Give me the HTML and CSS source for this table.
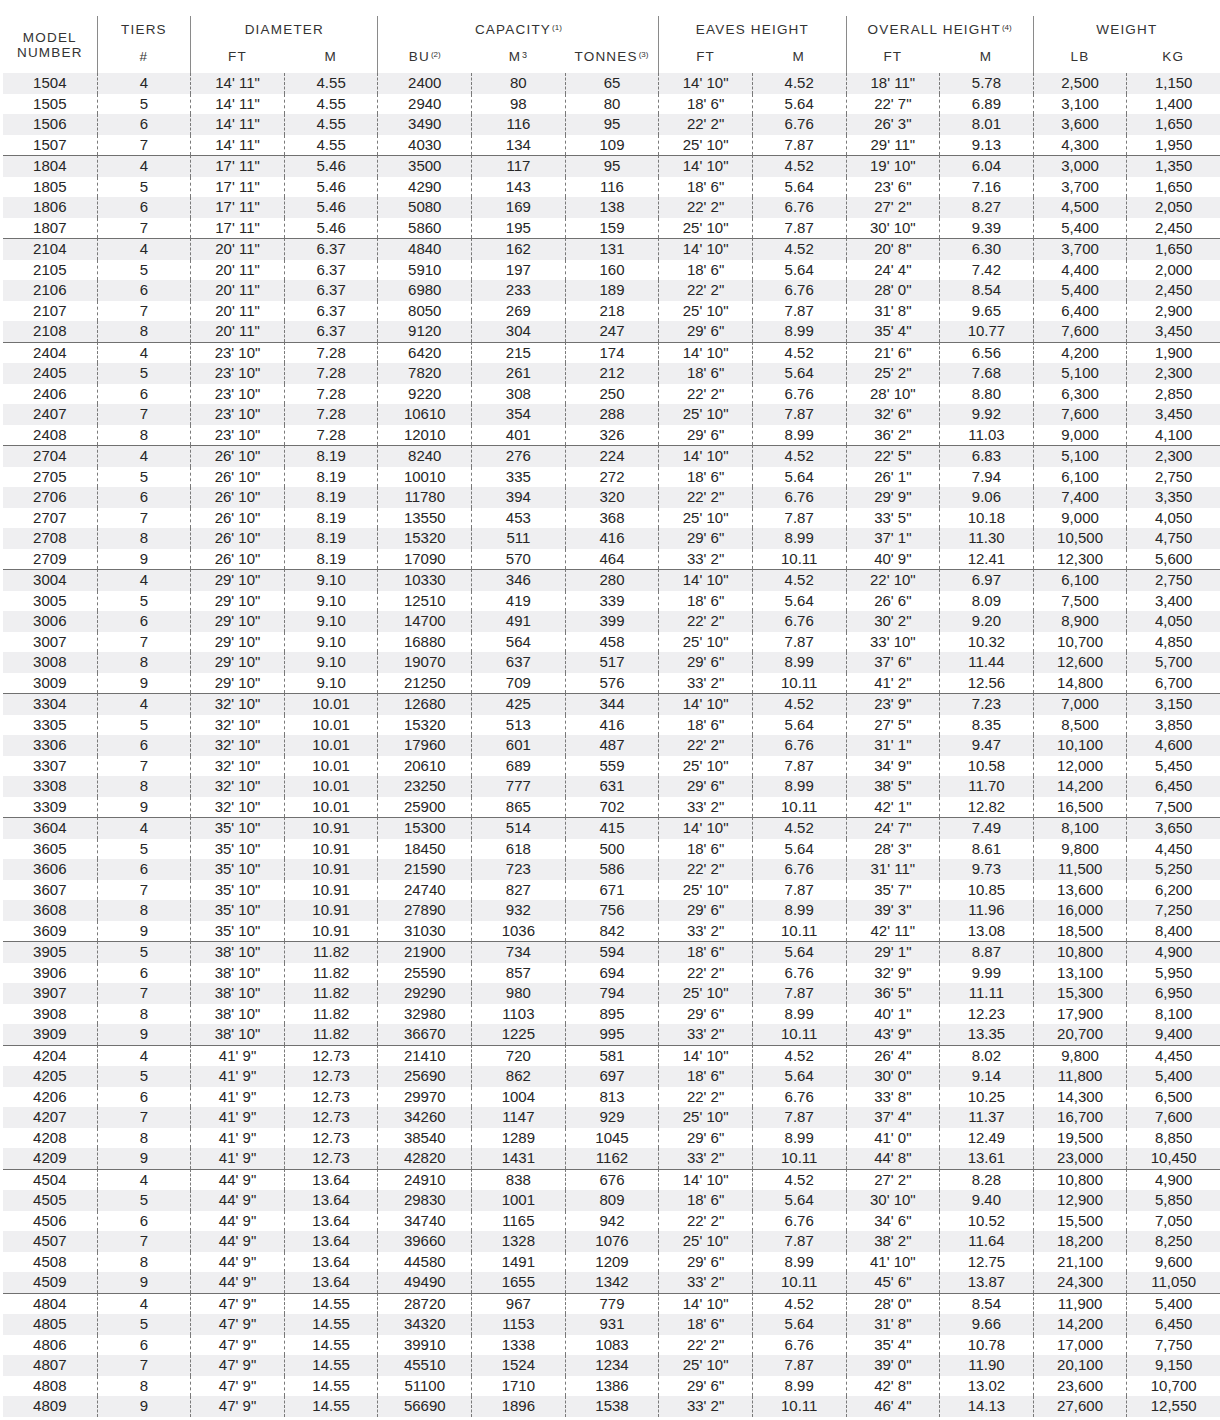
FILE: index.html
```html
<!DOCTYPE html>
<html>
<head>
<meta charset="utf-8">
<link rel="stylesheet" href="styles.css">
</head>
<body>
<table class="specs">
<colgroup>
<col class="c"><col class="c"><col class="c"><col class="c"><col class="c"><col class="c"><col class="c"><col class="c"><col class="c"><col class="c"><col class="c"><col class="c"><col class="c">
</colgroup>
<thead>
<tr class="h1">
<th rowspan="2" class="model">MODEL<br>NUMBER</th>
<th class="g">TIERS</th>
<th colspan="2" class="g">DIAMETER</th>
<th colspan="3" class="g">CAPACITY<sup class="fn">(1)</sup></th>
<th colspan="2" class="g">EAVES HEIGHT</th>
<th colspan="2" class="g">OVERALL HEIGHT<sup class="fn">(4)</sup></th>
<th colspan="2" class="g">WEIGHT</th>
</tr>
<tr class="h2">
<th class="g">#</th>
<th class="g">FT</th><th>M</th>
<th class="g">BU<sup class="fn">(2)</sup></th><th>M<sup class="cube">3</sup></th><th>TONNES<sup class="fn">(3)</sup></th>
<th class="g">FT</th><th>M</th>
<th class="g">FT</th><th>M</th>
<th class="g">LB</th><th>KG</th>
</tr>
</thead>
<tbody>
<tr><td>1504</td><td>4</td><td>14' 11"</td><td>4.55</td><td>2400</td><td>80</td><td>65</td><td>14' 10"</td><td>4.52</td><td>18' 11"</td><td>5.78</td><td>2,500</td><td>1,150</td></tr>
<tr><td>1505</td><td>5</td><td>14' 11"</td><td>4.55</td><td>2940</td><td>98</td><td>80</td><td>18' 6"</td><td>5.64</td><td>22' 7"</td><td>6.89</td><td>3,100</td><td>1,400</td></tr>
<tr><td>1506</td><td>6</td><td>14' 11"</td><td>4.55</td><td>3490</td><td>116</td><td>95</td><td>22' 2"</td><td>6.76</td><td>26' 3"</td><td>8.01</td><td>3,600</td><td>1,650</td></tr>
<tr><td>1507</td><td>7</td><td>14' 11"</td><td>4.55</td><td>4030</td><td>134</td><td>109</td><td>25' 10"</td><td>7.87</td><td>29' 11"</td><td>9.13</td><td>4,300</td><td>1,950</td></tr>
<tr class="grp"><td>1804</td><td>4</td><td>17' 11"</td><td>5.46</td><td>3500</td><td>117</td><td>95</td><td>14' 10"</td><td>4.52</td><td>19' 10"</td><td>6.04</td><td>3,000</td><td>1,350</td></tr>
<tr><td>1805</td><td>5</td><td>17' 11"</td><td>5.46</td><td>4290</td><td>143</td><td>116</td><td>18' 6"</td><td>5.64</td><td>23' 6"</td><td>7.16</td><td>3,700</td><td>1,650</td></tr>
<tr><td>1806</td><td>6</td><td>17' 11"</td><td>5.46</td><td>5080</td><td>169</td><td>138</td><td>22' 2"</td><td>6.76</td><td>27' 2"</td><td>8.27</td><td>4,500</td><td>2,050</td></tr>
<tr><td>1807</td><td>7</td><td>17' 11"</td><td>5.46</td><td>5860</td><td>195</td><td>159</td><td>25' 10"</td><td>7.87</td><td>30' 10"</td><td>9.39</td><td>5,400</td><td>2,450</td></tr>
<tr class="grp"><td>2104</td><td>4</td><td>20' 11"</td><td>6.37</td><td>4840</td><td>162</td><td>131</td><td>14' 10"</td><td>4.52</td><td>20' 8"</td><td>6.30</td><td>3,700</td><td>1,650</td></tr>
<tr><td>2105</td><td>5</td><td>20' 11"</td><td>6.37</td><td>5910</td><td>197</td><td>160</td><td>18' 6"</td><td>5.64</td><td>24' 4"</td><td>7.42</td><td>4,400</td><td>2,000</td></tr>
<tr><td>2106</td><td>6</td><td>20' 11"</td><td>6.37</td><td>6980</td><td>233</td><td>189</td><td>22' 2"</td><td>6.76</td><td>28' 0"</td><td>8.54</td><td>5,400</td><td>2,450</td></tr>
<tr><td>2107</td><td>7</td><td>20' 11"</td><td>6.37</td><td>8050</td><td>269</td><td>218</td><td>25' 10"</td><td>7.87</td><td>31' 8"</td><td>9.65</td><td>6,400</td><td>2,900</td></tr>
<tr><td>2108</td><td>8</td><td>20' 11"</td><td>6.37</td><td>9120</td><td>304</td><td>247</td><td>29' 6"</td><td>8.99</td><td>35' 4"</td><td>10.77</td><td>7,600</td><td>3,450</td></tr>
<tr class="grp"><td>2404</td><td>4</td><td>23' 10"</td><td>7.28</td><td>6420</td><td>215</td><td>174</td><td>14' 10"</td><td>4.52</td><td>21' 6"</td><td>6.56</td><td>4,200</td><td>1,900</td></tr>
<tr><td>2405</td><td>5</td><td>23' 10"</td><td>7.28</td><td>7820</td><td>261</td><td>212</td><td>18' 6"</td><td>5.64</td><td>25' 2"</td><td>7.68</td><td>5,100</td><td>2,300</td></tr>
<tr><td>2406</td><td>6</td><td>23' 10"</td><td>7.28</td><td>9220</td><td>308</td><td>250</td><td>22' 2"</td><td>6.76</td><td>28' 10"</td><td>8.80</td><td>6,300</td><td>2,850</td></tr>
<tr><td>2407</td><td>7</td><td>23' 10"</td><td>7.28</td><td>10610</td><td>354</td><td>288</td><td>25' 10"</td><td>7.87</td><td>32' 6"</td><td>9.92</td><td>7,600</td><td>3,450</td></tr>
<tr><td>2408</td><td>8</td><td>23' 10"</td><td>7.28</td><td>12010</td><td>401</td><td>326</td><td>29' 6"</td><td>8.99</td><td>36' 2"</td><td>11.03</td><td>9,000</td><td>4,100</td></tr>
<tr class="grp"><td>2704</td><td>4</td><td>26' 10"</td><td>8.19</td><td>8240</td><td>276</td><td>224</td><td>14' 10"</td><td>4.52</td><td>22' 5"</td><td>6.83</td><td>5,100</td><td>2,300</td></tr>
<tr><td>2705</td><td>5</td><td>26' 10"</td><td>8.19</td><td>10010</td><td>335</td><td>272</td><td>18' 6"</td><td>5.64</td><td>26' 1"</td><td>7.94</td><td>6,100</td><td>2,750</td></tr>
<tr><td>2706</td><td>6</td><td>26' 10"</td><td>8.19</td><td>11780</td><td>394</td><td>320</td><td>22' 2"</td><td>6.76</td><td>29' 9"</td><td>9.06</td><td>7,400</td><td>3,350</td></tr>
<tr><td>2707</td><td>7</td><td>26' 10"</td><td>8.19</td><td>13550</td><td>453</td><td>368</td><td>25' 10"</td><td>7.87</td><td>33' 5"</td><td>10.18</td><td>9,000</td><td>4,050</td></tr>
<tr><td>2708</td><td>8</td><td>26' 10"</td><td>8.19</td><td>15320</td><td>511</td><td>416</td><td>29' 6"</td><td>8.99</td><td>37' 1"</td><td>11.30</td><td>10,500</td><td>4,750</td></tr>
<tr><td>2709</td><td>9</td><td>26' 10"</td><td>8.19</td><td>17090</td><td>570</td><td>464</td><td>33' 2"</td><td>10.11</td><td>40' 9"</td><td>12.41</td><td>12,300</td><td>5,600</td></tr>
<tr class="grp"><td>3004</td><td>4</td><td>29' 10"</td><td>9.10</td><td>10330</td><td>346</td><td>280</td><td>14' 10"</td><td>4.52</td><td>22' 10"</td><td>6.97</td><td>6,100</td><td>2,750</td></tr>
<tr><td>3005</td><td>5</td><td>29' 10"</td><td>9.10</td><td>12510</td><td>419</td><td>339</td><td>18' 6"</td><td>5.64</td><td>26' 6"</td><td>8.09</td><td>7,500</td><td>3,400</td></tr>
<tr><td>3006</td><td>6</td><td>29' 10"</td><td>9.10</td><td>14700</td><td>491</td><td>399</td><td>22' 2"</td><td>6.76</td><td>30' 2"</td><td>9.20</td><td>8,900</td><td>4,050</td></tr>
<tr><td>3007</td><td>7</td><td>29' 10"</td><td>9.10</td><td>16880</td><td>564</td><td>458</td><td>25' 10"</td><td>7.87</td><td>33' 10"</td><td>10.32</td><td>10,700</td><td>4,850</td></tr>
<tr><td>3008</td><td>8</td><td>29' 10"</td><td>9.10</td><td>19070</td><td>637</td><td>517</td><td>29' 6"</td><td>8.99</td><td>37' 6"</td><td>11.44</td><td>12,600</td><td>5,700</td></tr>
<tr><td>3009</td><td>9</td><td>29' 10"</td><td>9.10</td><td>21250</td><td>709</td><td>576</td><td>33' 2"</td><td>10.11</td><td>41' 2"</td><td>12.56</td><td>14,800</td><td>6,700</td></tr>
<tr class="grp"><td>3304</td><td>4</td><td>32' 10"</td><td>10.01</td><td>12680</td><td>425</td><td>344</td><td>14' 10"</td><td>4.52</td><td>23' 9"</td><td>7.23</td><td>7,000</td><td>3,150</td></tr>
<tr><td>3305</td><td>5</td><td>32' 10"</td><td>10.01</td><td>15320</td><td>513</td><td>416</td><td>18' 6"</td><td>5.64</td><td>27' 5"</td><td>8.35</td><td>8,500</td><td>3,850</td></tr>
<tr><td>3306</td><td>6</td><td>32' 10"</td><td>10.01</td><td>17960</td><td>601</td><td>487</td><td>22' 2"</td><td>6.76</td><td>31' 1"</td><td>9.47</td><td>10,100</td><td>4,600</td></tr>
<tr><td>3307</td><td>7</td><td>32' 10"</td><td>10.01</td><td>20610</td><td>689</td><td>559</td><td>25' 10"</td><td>7.87</td><td>34' 9"</td><td>10.58</td><td>12,000</td><td>5,450</td></tr>
<tr><td>3308</td><td>8</td><td>32' 10"</td><td>10.01</td><td>23250</td><td>777</td><td>631</td><td>29' 6"</td><td>8.99</td><td>38' 5"</td><td>11.70</td><td>14,200</td><td>6,450</td></tr>
<tr><td>3309</td><td>9</td><td>32' 10"</td><td>10.01</td><td>25900</td><td>865</td><td>702</td><td>33' 2"</td><td>10.11</td><td>42' 1"</td><td>12.82</td><td>16,500</td><td>7,500</td></tr>
<tr class="grp"><td>3604</td><td>4</td><td>35' 10"</td><td>10.91</td><td>15300</td><td>514</td><td>415</td><td>14' 10"</td><td>4.52</td><td>24' 7"</td><td>7.49</td><td>8,100</td><td>3,650</td></tr>
<tr><td>3605</td><td>5</td><td>35' 10"</td><td>10.91</td><td>18450</td><td>618</td><td>500</td><td>18' 6"</td><td>5.64</td><td>28' 3"</td><td>8.61</td><td>9,800</td><td>4,450</td></tr>
<tr><td>3606</td><td>6</td><td>35' 10"</td><td>10.91</td><td>21590</td><td>723</td><td>586</td><td>22' 2"</td><td>6.76</td><td>31' 11"</td><td>9.73</td><td>11,500</td><td>5,250</td></tr>
<tr><td>3607</td><td>7</td><td>35' 10"</td><td>10.91</td><td>24740</td><td>827</td><td>671</td><td>25' 10"</td><td>7.87</td><td>35' 7"</td><td>10.85</td><td>13,600</td><td>6,200</td></tr>
<tr><td>3608</td><td>8</td><td>35' 10"</td><td>10.91</td><td>27890</td><td>932</td><td>756</td><td>29' 6"</td><td>8.99</td><td>39' 3"</td><td>11.96</td><td>16,000</td><td>7,250</td></tr>
<tr><td>3609</td><td>9</td><td>35' 10"</td><td>10.91</td><td>31030</td><td>1036</td><td>842</td><td>33' 2"</td><td>10.11</td><td>42' 11"</td><td>13.08</td><td>18,500</td><td>8,400</td></tr>
<tr class="grp"><td>3905</td><td>5</td><td>38' 10"</td><td>11.82</td><td>21900</td><td>734</td><td>594</td><td>18' 6"</td><td>5.64</td><td>29' 1"</td><td>8.87</td><td>10,800</td><td>4,900</td></tr>
<tr><td>3906</td><td>6</td><td>38' 10"</td><td>11.82</td><td>25590</td><td>857</td><td>694</td><td>22' 2"</td><td>6.76</td><td>32' 9"</td><td>9.99</td><td>13,100</td><td>5,950</td></tr>
<tr><td>3907</td><td>7</td><td>38' 10"</td><td>11.82</td><td>29290</td><td>980</td><td>794</td><td>25' 10"</td><td>7.87</td><td>36' 5"</td><td>11.11</td><td>15,300</td><td>6,950</td></tr>
<tr><td>3908</td><td>8</td><td>38' 10"</td><td>11.82</td><td>32980</td><td>1103</td><td>895</td><td>29' 6"</td><td>8.99</td><td>40' 1"</td><td>12.23</td><td>17,900</td><td>8,100</td></tr>
<tr><td>3909</td><td>9</td><td>38' 10"</td><td>11.82</td><td>36670</td><td>1225</td><td>995</td><td>33' 2"</td><td>10.11</td><td>43' 9"</td><td>13.35</td><td>20,700</td><td>9,400</td></tr>
<tr class="grp"><td>4204</td><td>4</td><td>41' 9"</td><td>12.73</td><td>21410</td><td>720</td><td>581</td><td>14' 10"</td><td>4.52</td><td>26' 4"</td><td>8.02</td><td>9,800</td><td>4,450</td></tr>
<tr><td>4205</td><td>5</td><td>41' 9"</td><td>12.73</td><td>25690</td><td>862</td><td>697</td><td>18' 6"</td><td>5.64</td><td>30' 0"</td><td>9.14</td><td>11,800</td><td>5,400</td></tr>
<tr><td>4206</td><td>6</td><td>41' 9"</td><td>12.73</td><td>29970</td><td>1004</td><td>813</td><td>22' 2"</td><td>6.76</td><td>33' 8"</td><td>10.25</td><td>14,300</td><td>6,500</td></tr>
<tr><td>4207</td><td>7</td><td>41' 9"</td><td>12.73</td><td>34260</td><td>1147</td><td>929</td><td>25' 10"</td><td>7.87</td><td>37' 4"</td><td>11.37</td><td>16,700</td><td>7,600</td></tr>
<tr><td>4208</td><td>8</td><td>41' 9"</td><td>12.73</td><td>38540</td><td>1289</td><td>1045</td><td>29' 6"</td><td>8.99</td><td>41' 0"</td><td>12.49</td><td>19,500</td><td>8,850</td></tr>
<tr><td>4209</td><td>9</td><td>41' 9"</td><td>12.73</td><td>42820</td><td>1431</td><td>1162</td><td>33' 2"</td><td>10.11</td><td>44' 8"</td><td>13.61</td><td>23,000</td><td>10,450</td></tr>
<tr class="grp"><td>4504</td><td>4</td><td>44' 9"</td><td>13.64</td><td>24910</td><td>838</td><td>676</td><td>14' 10"</td><td>4.52</td><td>27' 2"</td><td>8.28</td><td>10,800</td><td>4,900</td></tr>
<tr><td>4505</td><td>5</td><td>44' 9"</td><td>13.64</td><td>29830</td><td>1001</td><td>809</td><td>18' 6"</td><td>5.64</td><td>30' 10"</td><td>9.40</td><td>12,900</td><td>5,850</td></tr>
<tr><td>4506</td><td>6</td><td>44' 9"</td><td>13.64</td><td>34740</td><td>1165</td><td>942</td><td>22' 2"</td><td>6.76</td><td>34' 6"</td><td>10.52</td><td>15,500</td><td>7,050</td></tr>
<tr><td>4507</td><td>7</td><td>44' 9"</td><td>13.64</td><td>39660</td><td>1328</td><td>1076</td><td>25' 10"</td><td>7.87</td><td>38' 2"</td><td>11.64</td><td>18,200</td><td>8,250</td></tr>
<tr><td>4508</td><td>8</td><td>44' 9"</td><td>13.64</td><td>44580</td><td>1491</td><td>1209</td><td>29' 6"</td><td>8.99</td><td>41' 10"</td><td>12.75</td><td>21,100</td><td>9,600</td></tr>
<tr><td>4509</td><td>9</td><td>44' 9"</td><td>13.64</td><td>49490</td><td>1655</td><td>1342</td><td>33' 2"</td><td>10.11</td><td>45' 6"</td><td>13.87</td><td>24,300</td><td>11,050</td></tr>
<tr class="grp"><td>4804</td><td>4</td><td>47' 9"</td><td>14.55</td><td>28720</td><td>967</td><td>779</td><td>14' 10"</td><td>4.52</td><td>28' 0"</td><td>8.54</td><td>11,900</td><td>5,400</td></tr>
<tr><td>4805</td><td>5</td><td>47' 9"</td><td>14.55</td><td>34320</td><td>1153</td><td>931</td><td>18' 6"</td><td>5.64</td><td>31' 8"</td><td>9.66</td><td>14,200</td><td>6,450</td></tr>
<tr><td>4806</td><td>6</td><td>47' 9"</td><td>14.55</td><td>39910</td><td>1338</td><td>1083</td><td>22' 2"</td><td>6.76</td><td>35' 4"</td><td>10.78</td><td>17,000</td><td>7,750</td></tr>
<tr><td>4807</td><td>7</td><td>47' 9"</td><td>14.55</td><td>45510</td><td>1524</td><td>1234</td><td>25' 10"</td><td>7.87</td><td>39' 0"</td><td>11.90</td><td>20,100</td><td>9,150</td></tr>
<tr><td>4808</td><td>8</td><td>47' 9"</td><td>14.55</td><td>51100</td><td>1710</td><td>1386</td><td>29' 6"</td><td>8.99</td><td>42' 8"</td><td>13.02</td><td>23,600</td><td>10,700</td></tr>
<tr><td>4809</td><td>9</td><td>47' 9"</td><td>14.55</td><td>56690</td><td>1896</td><td>1538</td><td>33' 2"</td><td>10.11</td><td>46' 4"</td><td>14.13</td><td>27,600</td><td>12,550</td></tr>
</tbody>
</table>
</body>
</html>
```
FILE: styles.css
```css
html, body {
  margin: 0;
  padding: 0;
  background: #ffffff;
}

body {
  padding: 16px 0 0 3px;
  font-family: "Liberation Sans", Arial, sans-serif;
  color: #262626;
}

.specs {
  width: 1217px;
  table-layout: fixed;
  border-collapse: separate;
  border-spacing: 0;
}

.specs col.c {
  width: 93.6px;
}

.specs th {
  font-weight: normal;
  font-size: 13.5px;
  letter-spacing: 1.2px;
  color: #333333;
  text-align: center;
  vertical-align: middle;
  padding: 0;
  line-height: 15px;
}

.specs .h1 th {
  height: 27px;
  padding-bottom: 1px;
}

.specs .h2 th {
  height: 25px;
  padding-bottom: 4px;
}

.specs th.model {
  padding-bottom: 0;
  padding-top: 0;
}

.specs th.g {
  border-left: 1px solid #8a8a8a;
}

.specs .fn {
  font-size: 8px;
  letter-spacing: 0;
  vertical-align: top;
  position: relative;
  top: -2px;
  margin-left: 1px;
}

.specs .cube {
  font-size: 9px;
  letter-spacing: 0;
  vertical-align: top;
  margin-left: 1px;
  position: relative;
  top: -1px;
}

.specs td {
  font-size: 15px;
  text-align: center;
  vertical-align: middle;
  height: 20.5px;
  padding: 0;
  line-height: 18px;
  color: #262626;
}

.specs td + td {
  border-left: 1px dashed #7a7a7a;
}

.specs tbody tr:nth-child(odd) td {
  background: #efeff1;
}

.specs tr.grp td {
  border-top: 1px solid #707070;
}
```
